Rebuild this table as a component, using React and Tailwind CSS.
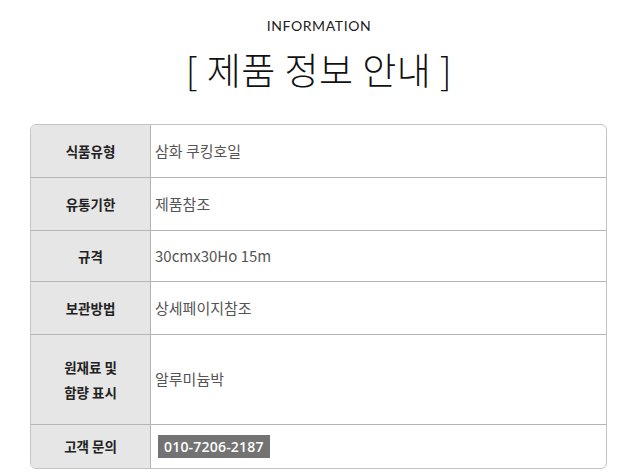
export default function App() {
  const rows = [
    { h: "식품유형", v: "삼화 쿠킹호일", height: "h-[53px]" },
    { h: "유통기한", v: "제품참조", height: "h-[53px]" },
    { h: "규격", v: "30cmx30Ho 15m", height: "h-[51px]" },
    { h: "보관방법", v: "상세페이지참조", height: "h-[53px]" },
    { h: "원재료 및\n함량 표시", v: "알루미늄박", height: "h-[90px]", multi: true },
  ];
  return (
    <div className="w-[638px] h-[475px] bg-white overflow-hidden" style={{ fontFamily: '"Noto Sans CJK KR", "Noto Sans", sans-serif' }}>
      <div className="pt-[17px] text-center text-[14px] leading-[18px] text-[#222] tracking-[0.6px]" style={{ fontFamily: 'Lato, "Noto Sans", sans-serif' }}>
        INFORMATION
      </div>
      <div className="mt-[9px] text-center text-[37px] leading-[50px] font-light text-[#111] tracking-[0.5px]">
        [ 제품 정보 안내 ]
      </div>
      <div className="ml-[30px] mt-[30px] w-[577px] border border-[#c4c4c4] rounded-[6px] overflow-hidden">
        {rows.map((r, i) => (
          <div key={i} className={`grid grid-cols-[120px_1fr] border-b border-[#b5b5b5] ${r.height}`}>
            <div className="bg-[#e6e6e6] border-r border-[#b5b5b5] flex items-center justify-center text-center text-[13.5px] font-bold text-[#222] leading-[25px] whitespace-pre-line">
              {r.h}
            </div>
            <div className="flex items-center pl-[4px] text-[15px] text-[#555]">{r.v}</div>
          </div>
        ))}
        <div className="grid grid-cols-[120px_1fr] h-[43px]">
          <div className="bg-[#e6e6e6] border-r border-[#b5b5b5] flex items-center justify-center text-[13.5px] font-bold text-[#222]">
            고객 문의
          </div>
          <div className="flex items-center pl-[7px]">
            <span className="bg-[#737373] text-white text-[14px] font-semibold px-[6px] h-[23px] leading-[23px] tracking-[0.2px]" style={{ fontFamily: '"Open Sans", sans-serif' }}>
              010-7206-2187
            </span>
          </div>
        </div>
      </div>
    </div>
  );
}
